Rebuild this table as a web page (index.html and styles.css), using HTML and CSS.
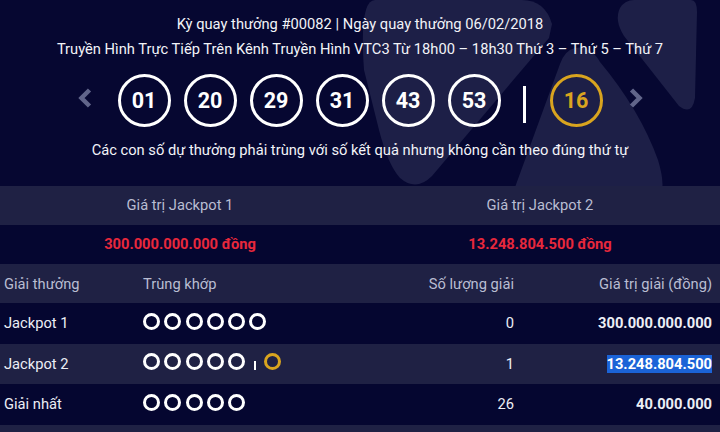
FILE: index.html
```html
<!DOCTYPE html>
<html lang="vi">
<head>
<meta charset="utf-8">
<title>Kết quả Mega 6/45</title>
<link rel="stylesheet" href="styles.css">
</head>
<body>
<section class="hero">
  <svg class="hero-bg" width="720" height="186" viewBox="0 0 720 186" aria-hidden="true">
    <path d="M375,0 L522,0 Q545,0 552,24 L549,38 L432,176 Q416,192 400,178 Q388,165 379,130 L364,70 Q359,0 375,0 Z"/>
    <path d="M575,48 Q590,45 600,62 Q640,110 658,160 Q664,180 662,190 L514,190 L560,64 Q565,50 575,48 Z"/>
    <path d="M634,0 L691,0 Q697,0 697,12 L695,98 Q692,116 679,106 L624,36 Q614,20 620,8 Q625,0 634,0 Z"/>
  </svg>
  <p class="title">Kỳ quay thưởng #00082 | Ngày quay thưởng 06/02/2018</p>
  <p class="title">Truyền Hình Trực Tiếp Trên Kênh Truyền Hình VTC3 Từ 18h00 – 18h30 Thứ 3 – Thứ 5 – Thứ 7</p>
  <div class="balls">
    <svg class="arrow arrow-left" width="14" height="20" viewBox="0 0 14 20"><polyline points="11.5,2 3.5,10 11.5,18"/></svg>
    <span class="ball">01</span>
    <span class="ball">20</span>
    <span class="ball">29</span>
    <span class="ball">31</span>
    <span class="ball">43</span>
    <span class="ball">53</span>
    <span class="sep"></span>
    <span class="ball ball-gold">16</span>
    <svg class="arrow arrow-right" width="14" height="20" viewBox="0 0 14 20"><polyline points="2.5,2 10.5,10 2.5,18"/></svg>
  </div>
  <p class="note">Các con số dự thưởng phải trùng với số kết quả nhưng không cần theo đúng thứ tự</p>
</section>

<section class="jackpots">
  <div class="jp-label">Giá trị Jackpot 1</div>
  <div class="jp-label">Giá trị Jackpot 2</div>
  <div class="jp-value">300.000.000.000 đồng</div>
  <div class="jp-value">13.248.804.500 đồng</div>
</section>

<table class="results">
  <colgroup>
    <col class="c1"><col class="c2"><col class="c3"><col class="c4">
  </colgroup>
  <thead>
    <tr>
      <th class="left">Giải thưởng</th>
      <th class="left">Trùng khớp</th>
      <th class="right">Số lượng giải</th>
      <th class="right">Giá trị giải (đồng)</th>
    </tr>
  </thead>
  <tbody>
    <tr class="dark">
      <td>Jackpot 1</td>
      <td><span class="dots"><i class="dot"></i><i class="dot"></i><i class="dot"></i><i class="dot"></i><i class="dot"></i><i class="dot"></i></span></td>
      <td class="right">0</td>
      <td class="right val">300.000.000.000</td>
    </tr>
    <tr class="light">
      <td>Jackpot 2</td>
      <td><span class="dots"><i class="dot"></i><i class="dot"></i><i class="dot"></i><i class="dot"></i><i class="dot"></i><i class="bar"></i><i class="dot dot-gold"></i></span></td>
      <td class="right">1</td>
      <td class="right val"><span class="sel">13.248.804.500</span></td>
    </tr>
    <tr class="dark">
      <td>Giải nhất</td>
      <td><span class="dots"><i class="dot"></i><i class="dot"></i><i class="dot"></i><i class="dot"></i><i class="dot"></i></span></td>
      <td class="right">26</td>
      <td class="right val">40.000.000</td>
    </tr>
    <tr class="light">
      <td>&nbsp;</td><td></td><td></td><td></td>
    </tr>
  </tbody>
</table>
</body>
</html>
```

FILE: styles.css
```css
* { box-sizing: border-box; }
html, body {
  margin: 0;
  padding: 0;
  background: #060731;
  font-family: Roboto, "Noto Sans", "Liberation Sans", sans-serif;
  font-size: 14.7px;
  color: #eceef5;
  overflow: hidden;
}

.hero {
  position: relative;
  height: 186px;
  padding-top: 12px;
  background: #060731;
  text-align: center;
}
.hero-bg {
  position: absolute;
  left: 0;
  top: 0;
  z-index: 0;
}
.hero-bg path { fill: #1d1f47; }
.hero > p, .hero > div { position: relative; z-index: 1; }

.title {
  margin: 0;
  line-height: 25px;
  color: #f2f3f8;
}

.balls {
  display: flex;
  justify-content: center;
  align-items: flex-start;
  margin-top: 12px;
  height: 53px;
}
.ball {
  width: 53px;
  height: 53px;
  border: 3px solid #ffffff;
  border-radius: 50%;
  display: flex;
  align-items: center;
  justify-content: center;
  font-size: 21.5px;
  font-weight: 700;
  color: #ffffff;
  margin-right: 13px;
}
.ball:nth-of-type(6) { margin-right: 22px; }
.ball-gold {
  border-color: #d9a41f;
  color: #d9a41f;
  margin-right: 26px;
}
.sep {
  width: 3px;
  height: 37px;
  margin-top: 12px;
  background: #ffffff;
  margin-right: 24px;
}
.arrow { margin-top: 14px; }
.arrow polyline {
  fill: none;
  stroke: #61658a;
  stroke-width: 4.5;
}
.arrow-left { margin-right: 26px; }

.note {
  margin: 11px 0 0;
  line-height: 25px;
  color: #f2f3f8;
}

.jackpots {
  display: grid;
  grid-template-columns: 1fr 1fr;
}
.jp-label {
  height: 39px;
  line-height: 39px;
  text-align: center;
  background: #1f2144;
  color: #b9bdd2;
}
.jp-value {
  height: 39px;
  line-height: 39px;
  text-align: center;
  background: #050630;
  color: #e8283c;
  font-weight: 700;
}

.results {
  width: 720px;
  border-collapse: collapse;
  table-layout: fixed;
  font-size: 14.7px;
}
.c1 { width: 143px; }
.c2 { width: 221px; }
.c3 { width: 150px; }
.c4 { width: 206px; }

.results th {
  height: 39px;
  padding: 0;
  font-weight: 400;
  color: #b9bdd2;
  background: #1f2144;
}
.results td {
  height: 40.5px;
  padding: 0;
  color: #eceef5;
}
.results th:first-child, .results td:first-child { padding-left: 4px; }
.results th:last-child, .results td:last-child { padding-right: 8px; }
.left { text-align: left; }
.right { text-align: right; }
.dark td { background: #050630; }
.light td { background: #1f2144; }
.val { font-weight: 700; color: #f4f5fa; }
.sel { background: #1b63d7; color: #ffffff; }

.dots {
  display: flex;
  align-items: center;
  height: 17px;
  margin-top: -4px;
}
.dot {
  display: block;
  width: 17px;
  height: 17px;
  border: 3px solid #ffffff;
  border-radius: 50%;
  margin-right: 4.3px;
}
.dot-gold { border-color: #d9a41f; }
.bar {
  display: block;
  width: 2px;
  height: 9px;
  margin: 8px 8px 0 5px;
  background: #ffffff;
}
```
